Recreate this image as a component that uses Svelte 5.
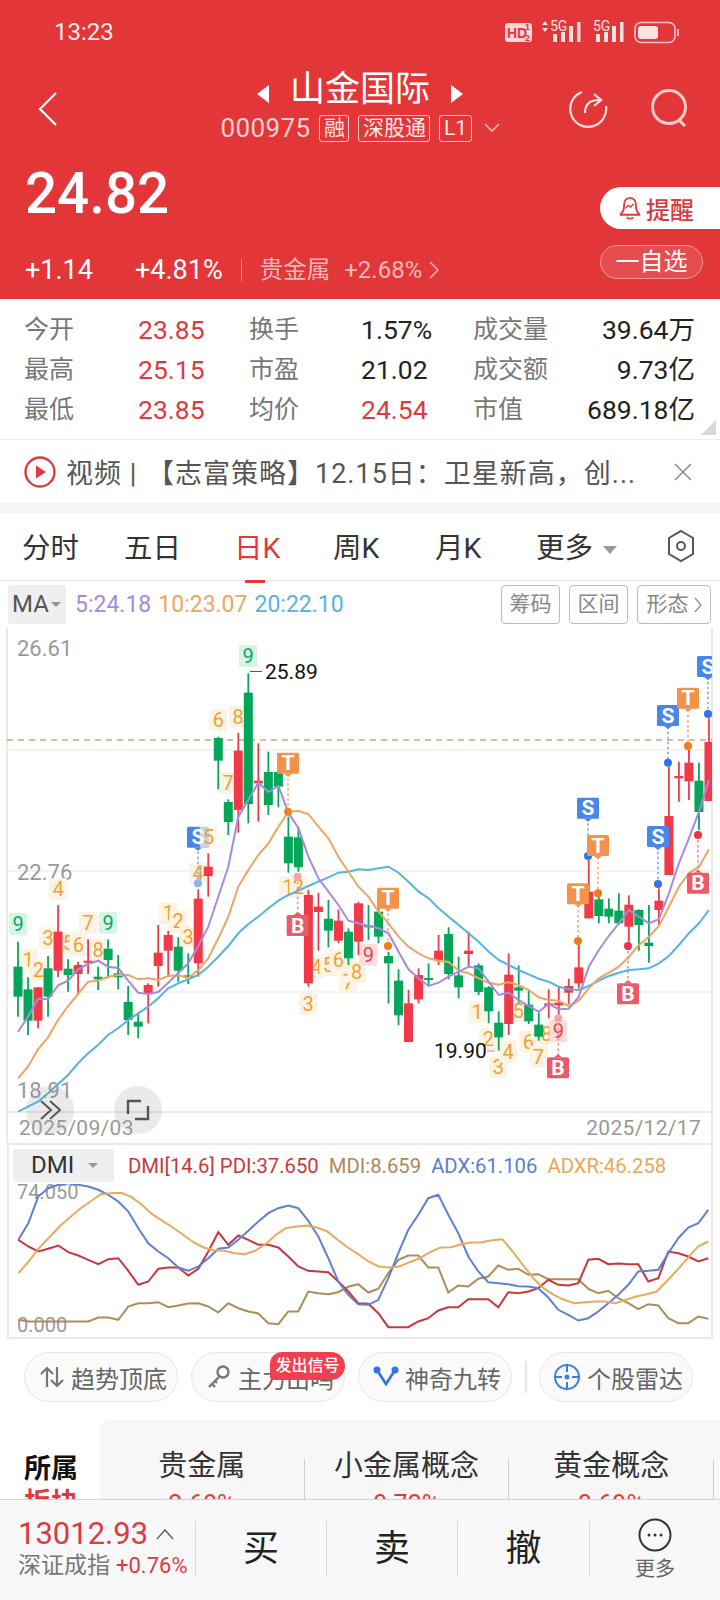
<script>
	// Candle values below are in "trace" units: y = 630 + v / 3, one candle every 10px
	const cx = (i) => 18 + 10.014 * i;
	const py = (v) => 630 + v / 3;
	const zx = (v) => v / 3;
	const rx = (v) => 360 + v / 3;

	const candles = [
		['g',935,1010,1100,1160],['g',1042,1078,1172,1215],['r',1072,1072,1172,1195],['g',978,1015,1100,1160],
		['r',826,905,1022,1042],['g',988,1016,1035,1085],['r',995,1005,1032,1095],['r',928,992,998,1032],
		['g',1010,1040,1048,1080],['g',928,956,990,1045],['g',975,1030,1042,1078],['g',1068,1116,1170,1215],
		['g',1150,1175,1190,1225],['r',1060,1065,1092,1180],['r',885,968,1008,1070],['r',902,915,962,1035],
		['g',922,950,1022,1055],['g',970,1036,1044,1062],['r',778,806,1000,1040],['r',670,710,738,800],
		['g',320,324,392,478],['g',508,516,576,615],['r',308,362,540,608],['g',130,188,522,580],
		['r',340,452,460,575],['g',365,426,525,555],['g',370,426,470,532],['g',560,620,700,728],
		['g',590,622,712,725],['r',780,795,1060,1070],['r',788,830,846,962],['g',810,866,902,952],
		['r',838,872,932,940],['g',895,905,985,1005],['r',815,820,935,975],['g',825,886,892,930],
		['g',800,845,920,940],['g',965,978,1000,1120],['g',1018,1052,1156,1186],['r',1080,1120,1236,1236],
		['r',1015,1035,1108,1120],['g',1000,1044,1047,1068],['r',915,962,990,1005],['g',892,912,1032,1048],
		['g',980,1036,1072,1105],['r',905,962,972,1010],['g',1000,1006,1086,1095],['g',1068,1072,1144,1180],
		['g',1144,1178,1222,1262],['r',970,1034,1182,1215],['g',1006,1072,1082,1118],['g',1078,1124,1174,1182],
		['g',1148,1184,1220,1232],['r',1078,1120,1128,1165],['r',1072,1118,1126,1158],['r',1046,1068,1088,1122],
		['r',945,1012,1060,1075],['r',690,785,865,865],['g',800,808,858,880],['g',805,836,860,880],
		['g',790,842,880,885],['r',796,824,890,935],['g',838,840,885,962],['g',825,938,948,998],
		['r',775,812,840,885],['r',410,558,735,735],['r',395,438,445,515],['r',360,398,454,510],
		['g',398,452,546,600],['r',265,336,513,513]
	];

	const ma5 = [1205,1160,1106,1108,1066,1052,1018,1002,992,1010,1014,1052,1088,1092,1086,1058,1030,1000,948,890,800,710,560,510,458,486,468,548,595,680,745,785,825,872,880,
		888,895,910,965,1018,1045,1068,1058,1040,1025,1010,1015,1055,1095,1088,1110,1128,1145,1122,1138,1136,1100,1010,960,918,880,840,860,880,868,790,700,625,545,450];
	const ma10 = [1345,1310,1258,1222,1170,1128,1092,1055,1052,1040,1035,1035,1048,1045,1050,1038,1036,1044,1020,985,925,860,770,720,675,640,590,545,543,552,590,625,680,725,770,
		800,845,880,920,950,970,985,992,996,1022,1030,1045,1058,1064,1056,1066,1080,1102,1110,1112,1128,1112,1075,1045,1028,1010,980,945,920,888,830,770,730,710,658];
	const ma20 = [1445,1430,1415,1390,1362,1335,1300,1270,1245,1215,1195,1170,1150,1130,1105,1075,1060,1048,1035,1010,980,948,910,882,860,835,812,795,782,768,755,742,728,725,718,
		720,715,710,728,755,785,805,835,860,885,910,935,965,990,1005,1020,1033,1046,1055,1070,1078,1080,1068,1052,1038,1028,1020,1018,1015,1000,978,945,910,880,840];

	const line = (arr) => arr.map((v, i) => `${cx(i).toFixed(1)},${py(v).toFixed(1)}`).join(' ');

	const pale = [
		[zx(85),990,'1'],[zx(115),1020,'2'],[zx(144),925,'3'],[zx(175),778,'4'],[zx(205),940,'5'],[zx(235),945,'6'],
		[zx(264),878,'7'],[zx(294),960,'8'],[zx(505),850,'1'],[zx(534),873,'2'],[zx(564),920,'3'],[zx(594),730,'4'],
		[zx(655),270,'6'],[zx(684),458,'7'],[zx(714),260,'8'],[zx(865),770,'1'],[zx(895),770,'2'],[zx(924),1122,'3'],
		[zx(950),1012,'4'],[zx(985),1005,'5'],[zx(1015),990,'6'],[zx(1045),1055,'7'],[zx(1070),1025,'8'],
		[rx(352),1145,'1'],[rx(385),1228,'2'],[rx(415),1312,'3'],[rx(444),1265,'4'],[rx(475),1142,'5'],
		[rx(505),1235,'6'],[rx(535),1280,'7'],[rx(560),1212,'8']
	];
	const greenNines = [[zx(54),882],[zx(324),878],[zx(744),78]];
	const redNines = [[rx(25),975],[rx(595),1203]];

	const links = [
		[zx(594),650,760,'#7fa8ec'],[rx(894),650,762,'#7fa8ec'],[rx(924),290,398,'#7fa8ec'],[rx(1044),140,252,'#7fa8ec'],
		[rx(684),565,678,'#7fa8ec'],[zx(864),430,545,'#f0a878'],[rx(84),835,948,'#f0a878'],[rx(654),825,933,'#f0a878'],
		[rx(714),680,790,'#f0a878'],[rx(984),240,348,'#f0a878'],[zx(893),740,850,'#ee8a94'],[rx(804),948,1060,'#ee8a94'],
		[rx(595),1165,1280,'#ee8a94'],[rx(1014),615,725,'#ee8a94']
	];
	const dots = [
		[zx(594),760,'#8fb2e8'],[rx(684),678,'#2f74e6'],[rx(894),762,'#2f74e6'],[rx(924),398,'#2f74e6'],[rx(1044),252,'#2f74e6'],
		[zx(864),545,'#f08030'],[rx(84),948,'#f07a1c'],[rx(654),933,'#f07a1c'],[rx(714),790,'#f07a1c'],[rx(984),348,'#f07a1c'],
		[zx(893),740,'#f3a6ae'],[rx(804),948,'#ec3344'],[rx(595),1165,'#f3a6ae'],[rx(1014),615,'#ec3344']
	];
	const flags = [
		[zx(594),620,'S'],[rx(684),533,'S'],[rx(894),618,'S'],[rx(924),255,'S'],[rx(1044),108,'S'],
		[zx(864),398,'T'],[rx(84),803,'T'],[rx(654),790,'T'],[rx(714),645,'T'],[rx(984),203,'T'],
		[zx(893),885,'B'],[rx(804),1090,'B'],[rx(594),1312,'B'],[rx(1014),758,'B']
	];
	const flagFill = { S: '#4a86ea', T: '#f5924a', B: '#ec5a68' };

	// DMI traces: y = 1130 + v / 3 (the zoom was 3x tall)
	const adx = [325,275,195,170,160,155,160,165,175,190,210,240,290,335,360,380,408,418,405,380,352,348,325,298,270,245,230,222,230,268,315,380,450,490,518,520,505,440,365,295,250,200,190,250,305,375,420,452,455,458,464,465,470,498,535,550,567,560,540,515,490,460,420,418,415,365,320,288,275,235];
	const adxr = [425,390,350,318,285,258,232,210,188,185,184,197,220,248,268,288,310,332,348,356,358,365,368,358,338,310,290,285,282,288,300,325,348,368,390,405,408,405,392,380,362,348,347,338,333,332,326,323,360,400,440,470,490,505,515,512,510,510,515,505,495,488,480,448,415,380,345,330];
	const pdi = [325,345,360,352,342,362,372,385,398,383,380,418,460,450,412,408,408,432,412,360,302,340,312,325,340,340,348,375,405,418,420,422,450,480,515,517,545,587,587,587,570,560,537,527,527,503,503,503,527,482,485,480,470,445,460,462,455,385,382,398,396,398,398,450,440,360,365,375,390,380];
	const mdi = [565,570,570,570,570,570,570,570,558,558,565,525,515,515,512,527,522,516,515,525,543,515,530,540,546,575,578,540,540,480,485,488,482,466,458,483,472,425,385,372,372,408,408,483,462,465,442,435,402,415,412,430,428,443,443,443,443,472,485,478,500,515,533,518,522,560,575,575,555,562];
	const dmiLine = (arr) =>
		arr.map((v, i) => `${(18.3 + (690 * i) / (arr.length - 1)).toFixed(1)},${(v / 3 - 52.500).toFixed(1)}`).join(' ');

	const stats = [
		['今开', '23.85', '换手', '1.57%', '成交量', '39.64万'],
		['最高', '25.15', '市盈', '21.02', '成交额', '9.73亿'],
		['最低', '23.85', '均价', '24.54', '市值', '689.18亿']
	];
	const redMid = '24.54';
	const tabs = ['分时', '五日', '日K', '周K', '月K'];
	const sectors = [['贵金属', '2.68%'], ['小金属概念', '0.72%'], ['黄金概念', '0.69%']];
</script>

<div class="page">
	<header class="head">
		<div class="status">
			<span class="clock">13:23</span>
			<svg class="sys" width="176" height="40" viewBox="505 12 176 40">
				<rect x="505" y="23" width="27" height="19" rx="3" fill="#f9d6d6" />
				<text x="507" y="38" class="hd">HD</text>
				<text x="525" y="30" class="tiny">1</text>
				<text x="525" y="41" class="tiny">2</text>
				<path d="M542 25l3-4 3 4zM542 28l3 4 3-4z" fill="#fbe0e0" />
				<text x="550" y="31" class="five">5G</text>
				<text x="593" y="31" class="five">5G</text>
				<g fill="#fbe0e0">
					<rect x="553" y="34" width="4" height="8" /><rect x="561" y="32" width="4" height="10" />
					<rect x="569" y="26" width="4" height="16" /><rect x="577" y="22" width="3.500" height="20" />
					<rect x="596" y="34" width="4" height="8" /><rect x="604" y="32" width="4" height="10" />
					<rect x="612" y="26" width="4" height="16" /><rect x="620" y="22" width="3.500" height="20" />
				</g>
				<rect x="635" y="22.500" width="40" height="20" rx="6" fill="none" stroke="#f5c4c4" stroke-width="1.600" />
				<rect x="638" y="26" width="20" height="13" rx="3" fill="#fbe3e3" />
				<rect x="677" y="29" width="2" height="7" fill="#f3bcbc" />
			</svg>
		</div>

		<div class="nav">
			<svg class="back" width="20" height="34" viewBox="0 0 20 34"><path d="M18 1L2 17l16 16" fill="none" stroke="#fff" stroke-width="2.200" /></svg>
			<div class="title">
				<div class="name">
					<i class="arrow left"></i>
					<span>山金国际</span>
					<i class="arrow right"></i>
				</div>
				<div class="code">
					<span class="num">000975</span>
					<span class="tag">融</span>
					<span class="tag">深股通</span>
					<span class="tag">L1</span>
					<svg class="codechev" width="16" height="10" viewBox="0 0 16 10"><path d="M1 1l7 7 7-7" fill="none" stroke="#f2b5b5" stroke-width="1.600" /></svg>
				</div>
			</div>
			<div class="tools">
				<svg width="44" height="44" viewBox="0 0 44 44" fill="none" stroke="#fbe1e1" stroke-width="2.200">
					<path d="M14 5A18 18 0 1 0 38 19" />
					<path d="M17 26c0-8 4-13 14-13" />
					<path d="M26 7l7 6-7 6" />
				</svg>
				<svg width="44" height="44" viewBox="0 0 44 44" fill="none" stroke="#f8caca" stroke-width="3">
					<circle cx="21" cy="20" r="16.500" />
					<path d="M31 33l6 6" />
				</svg>
			</div>
		</div>

		<div class="quote">
			<div class="left">
				<div class="price">24.82</div>
				<div class="chg">
					<span class="c1">+1.14</span>
					<span class="c2">+4.81%</span>
					<i class="vbar"></i>
					<span class="sec">贵金属</span>
					<span class="secp">+2.68%</span>
					<svg width="10" height="18" viewBox="0 0 10 18"><path d="M1 1l8 8-8 8" fill="none" stroke="#f4b8b8" stroke-width="1.500" /></svg>
				</div>
			</div>
			<div class="pills">
				<div class="remind">
					<svg width="22" height="26" viewBox="0 0 26 30" fill="none" stroke="#e2393c" stroke-width="2.200">
						<path d="M13 3c-5 0-7 4-7 9 0 5-1 8-4 10v1h22v-1c-3-2-4-5-4-10 0-5-2-9-7-9z" />
						<path d="M9 26c1 2 7 2 8 0" />
						<path d="M8 15l3-3 3 2 3-4" stroke-width="1.600" />
					</svg>
					<span>提醒</span>
				</div>
				<div class="fav">一自选</div>
			</div>
		</div>
	</header>

	<section class="stats">
		{#each stats as r}
			<div class="srow">
				<span class="lab">{r[0]}</span>
				<span class="val red">{r[1]}</span>
				<span class="lab">{r[2]}</span>
				<span class="val" class:red={r[3] === redMid}>{r[3]}</span>
				<span class="lab">{r[4]}</span>
				<span class="val end">{r[5]}</span>
			</div>
		{/each}
		<i class="corner"></i>
	</section>

	<section class="news">
		<svg width="34" height="34" viewBox="0 0 34 34">
			<circle cx="17" cy="17" r="14.500" fill="none" stroke="#e2393c" stroke-width="2.400" />
			<path d="M13 10.500l10 6.500-10 6.500z" fill="#e2393c" />
		</svg>
		<span class="ntext">视频 <i class="pipe">|</i> 【志富策略】12.15日：卫星新高，创...</span>
		<svg class="close" width="20" height="20" viewBox="0 0 20 20"><path d="M2 2l16 16M18 2L2 18" stroke="#8a8a8a" stroke-width="1.500" /></svg>
	</section>

	<div class="gap"></div>

	<nav class="tabs">
		{#each tabs as t, i}
			<span class="tab t{i}" class:on={t === '日K'}>{t}</span>
		{/each}
		<span class="tab t5">更多<i class="caret"></i></span>
		<svg class="hex" width="30" height="34" viewBox="0 0 30 34" fill="none" stroke="#555" stroke-width="2">
			<path d="M15 2l12 7v16l-12 7-12-7V9z" />
			<circle cx="15" cy="17" r="4" />
		</svg>
	</nav>

	<div class="marow">
		<div class="mabox">MA<i class="caret small"></i></div>
		<span class="ma m5">5:24.18</span>
		<span class="ma m10">10:23.07</span>
		<span class="ma m20">20:22.10</span>
		<div class="btns">
			<span class="btn">筹码</span>
			<span class="btn">区间</span>
			<span class="btn wide">形态<svg width="8" height="18" viewBox="0 0 8 18"><path d="M1 2l6 7-6 7" fill="none" stroke="#888" stroke-width="1.200" /></svg></span>
		</div>
	</div>

	<div class="kline">
		<svg width="720" height="515" viewBox="0 628 720 515">
			<defs>
				<clipPath id="plot"><rect x="7" y="628" width="705" height="484" /></clipPath>
			</defs>
			<g stroke="#f0f0f0" stroke-width="1.500">
				<path d="M7 750H712M7 871H712M7 992H712" />
			</g>
			<path d="M7 1112H712" stroke="#eaeaea" stroke-width="2" />
			<path d="M7 628V1143M712 628V1143" stroke="#eaeaea" stroke-width="2" />
			<path d="M7 740H712" stroke="#c9ad72" stroke-width="1.300" stroke-dasharray="6 5" />

			<text x="17" y="656" class="axis">26.61</text>
			<text x="17" y="880" class="axis">22.76</text>
			<text x="17" y="1098" class="axis">18.91</text>

			<g clip-path="url(#plot)">
				{#each pale as [x, v, n]}
					<rect x={x - 9} y={py(v) - 11} width="18" height="22" rx="2" fill="#fdf3e4" />
					<text {x} y={py(v) + 7} class="num-tag" fill="#f0a030">{n}</text>
				{/each}
				{#each greenNines as [x, v]}
					<rect x={x - 9} y={py(v) - 11} width="18" height="22" rx="2" fill="#d9f3e5" />
					<text {x} y={py(v) + 7} class="num-tag" fill="#0aa864">9</text>
				{/each}
				{#each redNines as [x, v]}
					<rect x={x - 9} y={py(v) - 11} width="18" height="22" rx="2" fill="#fbdcdc" />
					<text {x} y={py(v) + 7} class="num-tag" fill="#e9434b">9</text>
				{/each}

				{#each candles as [c, wt, bt, bb, wb], i}
					<path d="M{cx(i)} {py(wt)}V{py(wb)}" stroke={c === 'r' ? '#f03a48' : '#05a65a'} stroke-width="1.800" />
					<rect x={cx(i) - 4.500} y={py(bt)} width="9" height={Math.max(2, (bb - bt) / 3)} fill={c === 'r' ? '#f03a48' : '#05a65a'} />
				{/each}

				<polyline points={line(ma20)} fill="none" stroke="#55b3e4" stroke-width="2" />
				<polyline points={line(ma10)} fill="none" stroke="#eda661" stroke-width="2" />
				<polyline points={line(ma5)} fill="none" stroke="#a58be0" stroke-width="2" />

				{#each links as [x, a, b, c]}
					<path d="M{x} {py(a)}V{py(b)}" stroke={c} stroke-width="1.600" stroke-dasharray="2.500 2.500" />
				{/each}
				{#each dots as [x, v, c]}
					<circle cx={x} cy={py(v)} r="4" fill={c} />
				{/each}
				{#each flags as [x, v, f]}
					<rect x={x - 11} y={py(v) - 10} width="22" height="21" rx="1.500" fill={flagFill[f]} />
					{#if f === 'B'}
						<path d="M{x - 4} {py(v) - 10}l4 -3 4 3z" fill={flagFill[f]} />
					{:else}
						<path d="M{x - 4} {py(v) + 11}l4 3 4 -3z" fill={flagFill[f]} />
					{/if}
					<text {x} y={py(v) + 7.500} class="flag">{f}</text>
				{/each}
				<rect x={zx(626) - 9} y={py(620) - 11} width="18" height="22" rx="2" fill="#fdf3e4" opacity="0.7" />
				<text x={zx(626)} y={py(620) + 7} class="num-tag" fill="#f0a030">5</text>
			</g>

			<path d="M250 671.500H262" stroke="#555" stroke-width="1" />
			<text x="265" y="678.500" class="mark">25.89</text>
			<text x="434" y="1058" class="mark">19.90</text>
			<path d="M487 1051H495" stroke="#999" stroke-width="1" />

			<circle cx="50" cy="1110" r="24" fill="#8d8d8d" fill-opacity="0.18" />
			<circle cx="138" cy="1110" r="24" fill="#8d8d8d" fill-opacity="0.18" />
			<path d="M41 1101l10 9-10 9M50 1101l10 9-10 9" fill="none" stroke="#555" stroke-width="2" />
			<path d="M128 1114v-13h13M148 1106v13h-13" fill="none" stroke="#555" stroke-width="2.400" />

			<text x="19" y="1135" class="axis date">2025/09/03</text>
			<text x="701" y="1135" class="axis date end">2025/12/17</text>
		</svg>
	</div>

	<section class="dmi">
		<div class="dmihead">
			<div class="dmibox">DMI<i class="caret small"></i></div>
			<span class="d red2">DMI[14.6] PDI:37.650</span>
			<span class="d brown">MDI:8.659</span>
			<span class="d blue">ADX:61.106</span>
			<span class="d amber">ADXR:46.258</span>
		</div>
		<svg class="dmiplot" width="720" height="155" viewBox="0 0 720 155">
			<text x="17" y="15" class="axis small">74.050</text>
			<text x="17" y="148" class="axis small">0.000</text>
			<polyline points={dmiLine(mdi)} fill="none" stroke="#ac8d5a" stroke-width="2" />
			<polyline points={dmiLine(pdi)} fill="none" stroke="#c8373e" stroke-width="2" />
			<polyline points={dmiLine(adx)} fill="none" stroke="#5f80d0" stroke-width="2" />
			<polyline points={dmiLine(adxr)} fill="none" stroke="#e9a95e" stroke-width="2" />
		</svg>
	</section>

	<section class="chips">
		<div class="chip">
			<svg width="26" height="26" viewBox="0 0 26 26" fill="none" stroke="#777" stroke-width="2.200"><path d="M8 23V4M2 10l6-6 6 6M18 3v19M12 16l6 6 6-6" /></svg>
			<span>趋势顶底</span>
		</div>
		<div class="chip">
			<svg width="26" height="26" viewBox="0 0 26 26" fill="none" stroke="#777" stroke-width="2.400"><circle cx="17" cy="8" r="5.500" /><path d="M13 13L3 23M6 20l3 3M9 17l2 2" /></svg>
			<span>主力出鸣</span>
			<b class="badge">发出信号</b>
		</div>
		<div class="chip">
			<svg width="26" height="24" viewBox="0 0 26 24"><path d="M4 5l9 14 9-14" fill="none" stroke="#2f74e6" stroke-width="2.600" /><circle cx="4" cy="5" r="3.500" fill="#2f74e6" /><circle cx="22" cy="5" r="3.500" fill="#2f74e6" /></svg>
			<span>神奇九转</span>
		</div>
		<i class="chipsep"></i>
		<div class="chip">
			<svg width="28" height="28" viewBox="0 0 28 28" fill="none" stroke="#3f7fdc" stroke-width="2"><circle cx="14" cy="14" r="12" /><path d="M14 1v8M14 19v8M1 14h8M19 14h8" /><circle cx="14" cy="14" r="1.500" fill="#3f7fdc" /></svg>
			<span>个股雷达</span>
		</div>
	</section>

	<section class="sector">
		<div class="sectitle"><b>所属</b><b class="redb">板块</b></div>
		<div class="secbody">
			{#each sectors as [n, p]}
				<div class="seccell"><span class="sn">{n}</span><span class="sp">{p}</span></div>
			{/each}
		</div>
	</section>

	<footer class="bar">
		<div class="idx">
			<div class="idx1"><span>13012.93</span><svg width="18" height="12" viewBox="0 0 18 12"><path d="M1 11l8-9 8 9" fill="none" stroke="#666" stroke-width="1.500" /></svg></div>
			<div class="idx2"><span class="idxn">深证成指</span><span class="idxp">+0.76%</span></div>
		</div>
		<div class="act">买</div>
		<div class="act">卖</div>
		<div class="act">撤</div>
		<div class="more">
			<svg width="34" height="34" viewBox="0 0 34 34"><circle cx="17" cy="17" r="15.500" fill="none" stroke="#333" stroke-width="2" /><circle cx="11" cy="17" r="1.500" fill="#333" /><circle cx="17" cy="17" r="1.500" fill="#333" /><circle cx="23" cy="17" r="1.500" fill="#333" /></svg>
			<span>更多</span>
		</div>
	</footer>
</div>

<style>
	:global(body) {
		margin: 0;
		background: #fff;
	}

	.page {
		width: 720px;
		height: 1600px;
		overflow: hidden;
		display: flex;
		flex-direction: column;
		font-family: Roboto, "Noto Sans CJK SC", sans-serif;
		color: #333;
	}

	.head {
		flex: none;
		height: 299px;
		background: #e23639;
		color: #fff;
		display: flex;
		flex-direction: column;
	}

	.status {
		height: 64px;
		display: flex;
		align-items: center;
		justify-content: space-between;
		padding-left: 54px;
		padding-right: 39px;
	}

	.clock {
		font-size: 24px;
		color: #fdeaea;
	}

	.sys .hd {
		font: bold 14px "Liberation Sans", sans-serif;
		fill: #e23639;
	}

	.sys .tiny {
		font: bold 9px "Liberation Sans", sans-serif;
		fill: #e23639;
	}

	.sys .five {
		font: 14px Roboto, sans-serif;
		fill: #fbe0e0;
	}

	.nav {
		height: 84px;
		display: grid;
		grid-template-columns: 1fr auto 1fr;
		align-items: center;
	}

	.back {
		margin-left: 38px;
		margin-top: 6px;
	}

	.title {
		display: flex;
		flex-direction: column;
		align-items: center;
	}

	.name {
		display: flex;
		align-items: center;
		gap: 21px;
		font-size: 35px;
		line-height: 44px;
		height: 44px;
	}

	.arrow {
		width: 0;
		height: 0;
		border-top: 9px solid transparent;
		border-bottom: 9px solid transparent;
		margin-top: 8px;
	}

	.arrow.left {
		border-right: 12px solid #fff;
	}

	.arrow.right {
		border-left: 12px solid #fff;
	}

	.code {
		display: flex;
		align-items: center;
		gap: 9px;
		color: #f8d0d0;
		height: 32px;
	}

	.code .num {
		font-size: 26px;
		letter-spacing: 0.4px;
	}

	.code .tag {
		color: #fde8e8;
		font-size: 21px;
		line-height: 25px;
		padding: 0 3.500px;
		border: 1px solid #f8caca;
		border-radius: 3px;
	}

	.codechev {
		margin-left: 3px;
	}

	.tools {
		display: flex;
		justify-content: flex-end;
		gap: 36px;
		padding-right: 28px;
		margin-top: 6px;
	}

	.quote {
		flex: 1;
		display: flex;
		justify-content: space-between;
		padding-left: 25px;
	}

	.price {
		font-size: 56.500px;
		font-weight: 500;
		line-height: 68px;
		margin-top: 12px;
	}

	.chg {
		display: flex;
		align-items: center;
		margin-top: 24px;
		font-size: 27px;
		line-height: 36px;
	}

	.c2 {
		margin-left: 42px;
	}

	.vbar {
		width: 1px;
		height: 22px;
		background: #f08a8a;
		margin: 0 18px;
	}

	.sec {
		font-size: 23.500px;
		color: #f5b9b9;
	}

	.secp {
		font-size: 24px;
		color: #f5b9b9;
		margin: 0 7px 0 14px;
	}

	.pills {
		width: 120px;
		padding-top: 39px;
	}

	.remind {
		height: 42px;
		background: #fff;
		border-radius: 21px 0 0 21px;
		display: flex;
		align-items: center;
		gap: 5px;
		padding-left: 19px;
		color: #d93a3c;
		font-size: 24px;
		font-weight: 500;
	}

	.fav {
		width: 101px;
		height: 32px;
		margin-top: 16px;
		border: 1px solid #f49a9a;
		border-radius: 17px;
		background: #e64d50;
		text-align: center;
		font-size: 24px;
		line-height: 32px;
		color: #fff;
	}

	.stats {
		flex: none;
		position: relative;
		height: 141px;
		padding-top: 11px;
		box-sizing: border-box;
		border-bottom: 1.500px solid #eee;
	}

	.srow {
		height: 40px;
		padding: 0 25px 0 24px;
		display: grid;
		grid-template-columns: 114px 111px 112px 112px 90px 1fr;
		align-items: center;
		line-height: 40px;
	}

	.lab {
		font-size: 25px;
		color: #777;
		white-space: nowrap;
	}

	.val {
		font-size: 26.500px;
		color: #222;
		white-space: nowrap;
	}

	.val.end {
		justify-self: end;
	}

	.val.red {
		color: #de3a3d;
	}

	.corner {
		position: absolute;
		right: 4px;
		bottom: 4px;
		width: 0;
		height: 0;
		border-left: 15px solid transparent;
		border-bottom: 15px solid #d8d8d8;
	}

	.news {
		flex: none;
		height: 63px;
		display: flex;
		align-items: center;
		padding-left: 23px;
		box-sizing: border-box;
	}

	.ntext {
		margin-left: 9px;
		font-size: 27px;
		letter-spacing: 1px;
		color: #555;
		white-space: nowrap;
	}

	.pipe {
		font-style: normal;
		margin-right: 2px;
	}

	.close {
		margin-left: auto;
		margin-right: 27px;
	}

	.gap {
		flex: none;
		height: 10px;
		background: #f5f5f5;
	}

	.tabs {
		flex: none;
		height: 68px;
		padding-bottom: 2px;
		border-bottom: 1.500px solid #e8e8e8;
		box-sizing: border-box;
		display: grid;
		grid-template-columns: 22px 102px 110px 99px 102px 101px 1fr 38px;
		align-items: center;
		font-size: 28.500px;
		color: #333;
	}

	.tab {
		white-space: nowrap;
		position: relative;
	}

	.t0 {
		grid-column: 2;
	}

	.on {
		color: #e2393c;
	}

	.on::after {
		content: "";
		position: absolute;
		left: 11px;
		width: 20px;
		bottom: -17px;
		height: 3px;
		background: #e2393c;
	}

	.hex {
		grid-column: 8;
		justify-self: start;
		margin-left: -16px;
	}

	.caret {
		display: inline-block;
		width: 0;
		height: 0;
		margin-left: 10px;
		vertical-align: 4px;
		border-left: 7px solid transparent;
		border-right: 7px solid transparent;
		border-top: 8px solid #999;
	}

	.caret.small {
		margin-left: 2px;
		border-left-width: 5px;
		border-right-width: 5px;
		border-top-width: 5px;
		vertical-align: 5px;
	}

	.marow {
		flex: none;
		height: 47px;
		display: flex;
		align-items: center;
		padding: 0 9px 0 8px;
		box-sizing: border-box;
	}

	.mabox {
		width: 58px;
		height: 39px;
		background: #efefef;
		border-radius: 3px;
		font-size: 24px;
		line-height: 39px;
		color: #555;
		padding-left: 4px;
		box-sizing: border-box;
		white-space: nowrap;
		margin-right: 9px;
	}

	.ma {
		font-size: 23px;
		margin-right: 7px;
	}

	.m5 {
		color: #a58be0;
	}

	.m10 {
		color: #eda661;
	}

	.m20 {
		color: #55b3e4;
	}

	.btns {
		margin-left: auto;
		display: flex;
		gap: 9px;
	}

	.btn {
		width: 59px;
		height: 39px;
		box-sizing: border-box;
		border: 1px solid #bbb;
		border-radius: 4px;
		font-size: 21px;
		line-height: 37px;
		text-align: center;
		color: #888;
	}

	.btn.wide {
		width: 74px;
		display: flex;
		align-items: center;
		justify-content: center;
		gap: 5px;
	}

	.kline {
		flex: none;
		height: 515px;
	}

	.kline svg {
		display: block;
	}

	.axis {
		font-family: Roboto, sans-serif;
		font-size: 22px;
		fill: #999;
	}

	.axis.date {
		font-size: 21px;
		letter-spacing: 0.3px;
	}

	.axis.end {
		text-anchor: end;
	}

	.axis.small {
		font-size: 20px;
	}

	.num-tag {
		font-family: Roboto, sans-serif;
		font-size: 20px;
		text-anchor: middle;
	}

	.flag {
		font-family: Roboto, sans-serif;
		font-size: 21px;
		font-weight: 700;
		fill: #fff;
		text-anchor: middle;
	}

	.mark {
		font-family: Roboto, sans-serif;
		font-size: 21px;
		fill: #111;
	}

	.dmi {
		flex: none;
		height: 196px;
		margin: 0 7px;
		border: 2px solid #eaeaea;
		box-sizing: border-box;
	}

	.dmihead {
		height: 37px;
		display: flex;
		align-items: center;
		padding-left: 4px;
		margin-top: 2px;
	}

	.dmibox {
		width: 101px;
		height: 33px;
		background: #efefef;
		border-radius: 3px;
		font-size: 24px;
		line-height: 33px;
		padding-left: 18px;
		box-sizing: border-box;
		white-space: nowrap;
		margin-right: 14px;
	}

	.dmibox .caret {
		margin-left: 14px;
	}

	.d {
		font-size: 20.300px;
		white-space: nowrap;
		margin-right: 10px;
	}

	.red2 {
		color: #c8373e;
	}

	.brown {
		color: #a98a5a;
	}

	.blue {
		color: #5a7ccf;
	}

	.amber {
		color: #e8a65a;
	}

	.dmiplot {
		display: block;
		margin-left: -9px;
	}

	.chips {
		flex: none;
		height: 81px;
		display: flex;
		align-items: flex-start;
		padding: 13px 0 0 24px;
		box-sizing: border-box;
	}

	.chip {
		position: relative;
		width: 154px;
		height: 50px;
		box-sizing: border-box;
		border: 1px solid #e6e6e6;
		border-radius: 25px;
		background: #fafafa;
		display: flex;
		align-items: center;
		justify-content: center;
		gap: 6px;
		padding-left: 4px;
		font-size: 24px;
		color: #666;
		margin-right: 13px;
		white-space: nowrap;
	}

	.chipsep {
		width: 2px;
		height: 32px;
		margin-top: 9px;
		background: #e5e5e5;
		margin-right: 12px;
	}

	.badge {
		position: absolute;
		right: -1px;
		top: -1px;
		width: 75px;
		height: 28px;
		border-radius: 12px 14px 14px 4px;
		background: #f0404f;
		color: #fff;
		font-size: 16px;
		font-weight: 500;
		line-height: 27px;
		text-align: center;
	}

	.sector {
		flex: 1;
		min-height: 0;
		display: flex;
		overflow: hidden;
	}

	.sectitle {
		width: 100px;
		padding: 32px 0 0 24px;
		box-sizing: border-box;
		display: flex;
		flex-direction: column;
		font-size: 27px;
		line-height: 34px;
		color: #111;
	}

	.redb {
		color: #e2393c;
	}

	.secbody {
		flex: 1;
		background: #f7f7f7;
		border-radius: 10px 0 0 0;
		display: flex;
		padding: 39px 6px 0 0;
	}

	.seccell {
		flex: 1;
		height: 60px;
		border-right: 1px solid #ccc;
		display: flex;
		flex-direction: column;
		align-items: center;
		font-size: 29px;
		line-height: 32px;
	}

	.sn {
		margin-top: -9px;
	}

	.sp {
		color: #e2393c;
		font-size: 25px;
		line-height: 46px;
	}

	.bar {
		flex: none;
		height: 101px;
		box-sizing: border-box;
		background: #f8f8fa;
		border-top: 1.500px solid #d4d4d6;
		display: grid;
		grid-template-columns: 196px 131px 131px 132px 130px;
		align-items: center;
	}

	.idx {
		height: 56px;
		padding-left: 18px;
		border-right: 1px solid #d8d8d8;
		margin-top: -2px;
		display: flex;
		flex-direction: column;
		justify-content: center;
	}

	.idx1 {
		display: flex;
		align-items: center;
		gap: 8px;
		font-size: 31px;
		line-height: 34px;
		color: #de3a3d;
	}

	.idx2 {
		display: flex;
		align-items: center;
		gap: 6px;
		line-height: 30px;
		white-space: nowrap;
	}

	.idxn {
		font-size: 23px;
		color: #777;
	}

	.idxp {
		font-size: 22px;
		color: #de3a3d;
	}

	.act {
		height: 56px;
		margin-top: -2px;
		border-right: 1px solid #d8d8d8;
		font-size: 36px;
		line-height: 56px;
		text-align: center;
		color: #222;
	}

	.more {
		display: flex;
		flex-direction: column;
		align-items: center;
		font-size: 20px;
		line-height: 26px;
		color: #666;
		gap: 4px;
	}
</style>
